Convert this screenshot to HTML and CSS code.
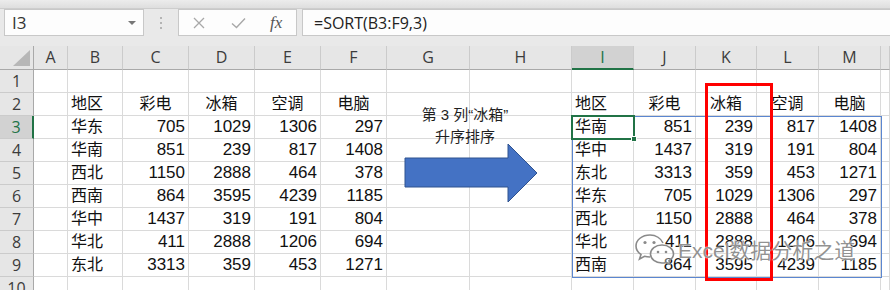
FILE: index.html
```html
<!DOCTYPE html>
<html lang="zh-CN">
<head>
  <meta charset="UTF-8" />
  <title>SORT 排序</title>
  <link rel="stylesheet" href="styles.css">
</head>
<body>
  <div class="app">
    <div class="ribbon-edge"></div>
    <div class="formula-row">
      <div class="namebox"><span>I3</span><span class="caret"></span></div>
      <div class="grip">
        <svg width="4" height="14" viewBox="0 0 4 14"><rect x="1" y="1" width="2" height="2" fill="#b4b4b4"/><rect x="1" y="6" width="2" height="2" fill="#b4b4b4"/><rect x="1" y="11" width="2" height="2" fill="#b4b4b4"/></svg>
      </div>
      <div class="fx-box">
        <svg class="icon-x" width="14" height="14" viewBox="0 0 14 14"><path d="M2 2 L12 12 M12 2 L2 12" stroke="#a8a8a8" stroke-width="1.3" fill="none"/></svg>
        <svg class="icon-ok" width="15" height="12" viewBox="0 0 15 12"><path d="M1 6.5 L5.5 10.5 L14 1.5" stroke="#a8a8a8" stroke-width="1.4" fill="none"/></svg>
        <span class="fx">fx</span>
      </div>
      <div class="formula">=SORT(B3:F9,3)</div>
    </div>

    <div class="sheet" id="sheet"></div>

    <!-- shapes on top of the grid -->
    <div class="note">第 3 列“冰箱”<br>升序排序</div>
    <svg class="arrow" width="140" height="64" viewBox="0 0 140 64">
      <polygon points="1,15 104,15 104,1 133,30 104,59 104,44 1,44" fill="#4472c4" stroke="#2f528f" stroke-width="1"/>
    </svg>
    <div class="spill"></div>
    <div class="active-cell"><span class="handle"></span></div>
    <div class="red-box"></div>

    <div class="watermark">
      <svg width="42" height="32" viewBox="0 0 42 32">
        <path d="M16 2 C8 2 2 7 2 13 C2 16.5 4 19.5 7 21.5 L5.5 26 L10.5 23.3 C12.2 23.8 14 24 16 24" stroke="#8a8a8a" stroke-width="1.6" fill="none"/>
        <path d="M29 10 C27 5.5 22 2 16 2" stroke="#8a8a8a" stroke-width="1.6" fill="none"/>
        <circle cx="11" cy="9.5" r="1.6" fill="#8a8a8a"/>
        <circle cx="20" cy="9.5" r="1.6" fill="#8a8a8a"/>
        <path d="M28 12 C21.5 12 16.5 16 16.5 21 C16.5 26 21.5 30 28 30 C29.5 30 30.8 29.8 32 29.4 L36 31.2 L35 27.6 C37.8 25.9 39.5 23.6 39.5 21 C39.5 16 34.5 12 28 12 Z" stroke="#8a8a8a" stroke-width="1.6" fill="rgba(255,255,255,0.35)"/>
        <circle cx="24" cy="19" r="1.3" fill="#8a8a8a"/>
        <circle cx="32" cy="19" r="1.3" fill="#8a8a8a"/>
      </svg>
      <span>Excel数据分析之道</span>
    </div>
  </div>

  <script>
    const letters = ['', 'A', 'B', 'C', 'D', 'E', 'F', 'G', 'H', 'I', 'J', 'K', 'L', 'M', ''];
    const heads = ['地区', '彩电', '冰箱', '空调', '电脑'];
    const source = [
      ['华东', 705, 1029, 1306, 297],
      ['华南', 851, 239, 817, 1408],
      ['西北', 1150, 2888, 464, 378],
      ['西南', 864, 3595, 4239, 1185],
      ['华中', 1437, 319, 191, 804],
      ['华北', 411, 2888, 1206, 694],
      ['东北', 3313, 359, 453, 1271]
    ];
    const sorted = source.slice().sort((a, b) => a[2] - b[2]);

    const sheet = document.getElementById('sheet');

    function cell(cls, text) {
      const d = document.createElement('div');
      d.className = cls;
      if (text !== undefined && text !== '') d.textContent = text;
      sheet.appendChild(d);
    }

    // B = column 2, I = column 9
    function valueAt(row, col) {
      let start = null, data = null;
      if (col >= 2 && col <= 6) { start = 2; data = source; }
      if (col >= 9 && col <= 13) { start = 9; data = sorted; }
      if (start === null) return null;
      const k = col - start;
      if (row === 2) return { text: heads[k], kind: k === 0 ? 'txt' : 'head' };
      if (row >= 3 && row <= 9) {
        const v = data[row - 3][k];
        return { text: v, kind: k === 0 ? 'txt' : 'num' };
      }
      return null;
    }

    letters.forEach((l, i) => {
      if (i === 0) cell('corner');
      else cell('col-head' + (l === 'I' ? ' active' : ''), l);
    });

    for (let r = 1; r <= 10; r++) {
      cell('row-head' + (r === 3 ? ' active' : ''), r);
      for (let c = 1; c < letters.length; c++) {
        const v = valueAt(r, c);
        if (v) cell('cell ' + v.kind, v.text);
        else cell('cell');
      }
    }
  </script>
</body>
</html>
```

FILE: styles.css
```css
* {
  box-sizing: border-box;
}
body {
  margin: 0;
  background: #fff;
  font-family: "Open Sans", "Noto Sans", sans-serif;
}
.app {
  position: relative;
  width: 890px;
  height: 290px;
  overflow: hidden;
}

/* formula bar */
.ribbon-edge {
  height: 9px;
  background: linear-gradient(#ececec, #dedede);
  border-bottom: 1px solid #cdcdcd;
}
.formula-row {
  display: flex;
  height: 37px;
  padding: 0 0 10px 4px;
  background: #e9e9e9;
}
.namebox {
  width: 140px;
  background: #fdfdfd;
  border: 1px solid #c8c8c8;
  display: flex;
  align-items: center;
  justify-content: space-between;
  padding: 0 7px 0 7px;
  font-size: 17px;
  color: #333;
}
.caret {
  width: 0;
  height: 0;
  border-left: 4px solid transparent;
  border-right: 4px solid transparent;
  border-top: 4px solid #777;
}
.grip {
  width: 34px;
  display: flex;
  align-items: center;
  justify-content: center;
}
.fx-box {
  width: 119px;
  background: #fdfdfd;
  border: 1px solid #c8c8c8;
  display: flex;
  align-items: center;
  padding-left: 13px;
}
.icon-ok {
  margin-left: 25px;
}
.fx {
  margin-left: 24px;
  font-family: "Liberation Serif", serif;
  font-style: italic;
  font-size: 17px;
  color: #555;
}
.formula {
  flex: 1;
  margin-left: 5px;
  margin-right: -2px;
  background: #fdfdfd;
  border: 1px solid #c8c8c8;
  padding-left: 11px;
  display: flex;
  align-items: center;
  font-size: 16px;
  color: #222;
}

/* grid */
.sheet {
  display: grid;
  grid-template-columns: 34px 34px 55px 66px 66px 66px 66px 83px 102px 62px 62px 61px 62px 62px 1fr;
  grid-template-rows: 24px repeat(10, 23px);
}
.corner,
.col-head,
.row-head {
  background: #e6e6e6;
  color: #3c3c3c;
  font-size: 16px;
}
.corner {
  position: relative;
  border-right: 1px solid #a9a9a9;
  border-bottom: 1px solid #a9a9a9;
}
.corner::after {
  content: "";
  position: absolute;
  right: 3px;
  bottom: 3px;
  width: 17px;
  height: 16px;
  background: #b7b7b7;
  clip-path: polygon(100% 0, 100% 100%, 0 100%);
}
.col-head {
  border-right: 1px solid #cbcbcb;
  border-bottom: 1px solid #a9a9a9;
  text-align: center;
  line-height: 23px;
}
.col-head.active {
  background: #d2d2d2;
  color: #217346;
  border-bottom: 2px solid #217346;
}
.row-head {
  border-right: 1px solid #a9a9a9;
  border-bottom: 1px solid #cbcbcb;
  text-align: center;
  line-height: 22px;
}
.row-head.active {
  background: #d2d2d2;
  color: #217346;
  border-right: 2px solid #217346;
}
.cell {
  border-right: 1px solid #dadada;
  border-bottom: 1px solid #dadada;
  font-family: "Liberation Sans", "Noto Sans CJK SC", sans-serif;
  font-size: 16px;
  line-height: 22px;
  color: #111;
  white-space: nowrap;
  overflow: visible;
}
.cell.txt {
  padding-left: 3px;
}
.cell.head {
  text-align: center;
}
.cell.num {
  text-align: right;
  padding-right: 3px;
  font-size: 17px;
}

/* overlays */
.note {
  position: absolute;
  left: 405px;
  top: 104px;
  width: 120px;
  text-align: center;
  font-family: "Liberation Sans", "Noto Sans CJK SC", sans-serif;
  font-size: 15px;
  line-height: 22px;
  color: #1f1f1f;
}
.arrow {
  position: absolute;
  left: 404px;
  top: 143px;
}
.spill {
  position: absolute;
  left: 572px;
  top: 116px;
  width: 310px;
  height: 162px;
  border: 1px solid #5b86d0;
}
.active-cell {
  position: absolute;
  left: 571px;
  top: 115px;
  width: 64px;
  height: 25px;
  border: 2px solid #217346;
}
.handle {
  position: absolute;
  right: -4px;
  bottom: -4px;
  width: 6px;
  height: 6px;
  background: #217346;
  border: 1px solid #fff;
}
.red-box {
  position: absolute;
  left: 705px;
  top: 83px;
  width: 68px;
  height: 198px;
  border: 3px solid #ff0000;
}
.watermark {
  position: absolute;
  left: 634px;
  top: 233px;
  display: flex;
  align-items: center;
  gap: 2px;
}
.watermark span {
  font-family: "Liberation Sans", "Noto Sans CJK SC", sans-serif;
  font-size: 21px;
  color: rgba(110, 110, 110, 0.75);
  text-shadow: 0 0 2px #fff, 0 0 1px #fff;
}
```
